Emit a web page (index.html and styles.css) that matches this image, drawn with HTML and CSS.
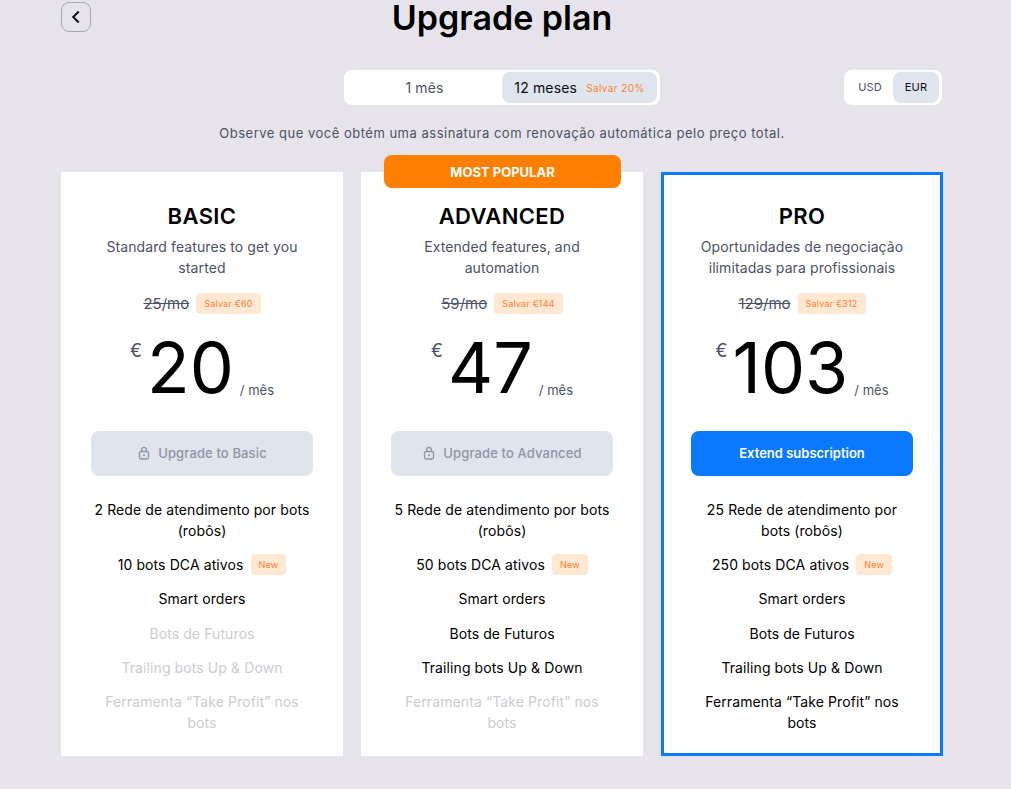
FILE: index.html
```html
<!DOCTYPE html>
<html lang="pt">
<head>
    <meta charset="UTF-8">
    <meta name="viewport" content="width=device-width, initial-scale=1.0">
    <title>Upgrade plan</title>
    <link rel="stylesheet" href="styles.css">
</head>
<body>
    <main class="page">
        <header class="top">
            <button class="back" aria-label="Voltar">
                <svg width="12" height="12" viewBox="0 0 12 12" fill="none"><path d="M8.7.5 3.2 6l5.5 5.5" stroke="#0b0b12" stroke-width="2"/></svg>
            </button>
            <h1>Upgrade plan</h1>
        </header>

        <section class="switches">
            <div class="switch period">
                <button class="opt">1 mês</button>
                <button class="opt active">12 meses <span class="save">Salvar 20%</span></button>
            </div>
            <div class="switch currency">
                <button class="opt">USD</button>
                <button class="opt active">EUR</button>
            </div>
        </section>

        <p class="note">Observe que você obtém uma assinatura com renovação automática pelo preço total.</p>

        <section class="plans">
            <article class="plan">
                <h2>BASIC</h2>
                <p class="desc">Standard features to get you started</p>
                <div class="old"><s>25/mo</s><span class="tag">Salvar €60</span></div>
                <div class="price"><span class="cur">€</span><span class="num">20</span><span class="per">/ mês</span></div>
                <button class="cta locked">
                    <svg width="14" height="14" viewBox="0 0 14 14" fill="none"><rect x="2.5" y="5.5" width="9" height="7.5" rx="1.5" stroke="#8f95a6" stroke-width="1.3"/><path d="M4.7 5.5V3.6a2.3 2.3 0 0 1 4.6 0v1.9" stroke="#8f95a6" stroke-width="1.3"/><circle cx="7" cy="9.2" r="1" fill="#8f95a6"/></svg>
                    Upgrade to Basic
                </button>
                <ul class="features">
                    <li>2 Rede de atendimento por bots (robôs)</li>
                    <li class="tagged">10 bots DCA ativos <span class="tag">New</span></li>
                    <li>Smart orders</li>
                    <li class="off">Bots de Futuros</li>
                    <li class="off">Trailing bots Up &amp; Down</li>
                    <li class="off">Ferramenta “Take Profit” nos bots</li>
                </ul>
            </article>

            <article class="plan">
                <div class="popular">MOST POPULAR</div>
                <h2>ADVANCED</h2>
                <p class="desc">Extended features, and automation</p>
                <div class="old"><s>59/mo</s><span class="tag">Salvar €144</span></div>
                <div class="price"><span class="cur">€</span><span class="num">47</span><span class="per">/ mês</span></div>
                <button class="cta locked">
                    <svg width="14" height="14" viewBox="0 0 14 14" fill="none"><rect x="2.5" y="5.5" width="9" height="7.5" rx="1.5" stroke="#8f95a6" stroke-width="1.3"/><path d="M4.7 5.5V3.6a2.3 2.3 0 0 1 4.6 0v1.9" stroke="#8f95a6" stroke-width="1.3"/><circle cx="7" cy="9.2" r="1" fill="#8f95a6"/></svg>
                    Upgrade to Advanced
                </button>
                <ul class="features">
                    <li>5 Rede de atendimento por bots (robôs)</li>
                    <li class="tagged">50 bots DCA ativos <span class="tag">New</span></li>
                    <li>Smart orders</li>
                    <li>Bots de Futuros</li>
                    <li>Trailing bots Up &amp; Down</li>
                    <li class="off">Ferramenta “Take Profit” nos bots</li>
                </ul>
            </article>

            <article class="plan current">
                <h2>PRO</h2>
                <p class="desc">Oportunidades de negociação ilimitadas para profissionais</p>
                <div class="old"><s>129/mo</s><span class="tag">Salvar €312</span></div>
                <div class="price"><span class="cur">€</span><span class="num">103</span><span class="per">/ mês</span></div>
                <button class="cta primary">Extend subscription</button>
                <ul class="features">
                    <li>25 Rede de atendimento por bots (robôs)</li>
                    <li class="tagged">250 bots DCA ativos <span class="tag">New</span></li>
                    <li>Smart orders</li>
                    <li>Bots de Futuros</li>
                    <li>Trailing bots Up &amp; Down</li>
                    <li>Ferramenta “Take Profit” nos bots</li>
                </ul>
            </article>
        </section>
    </main>
</body>
</html>
```

FILE: styles.css
```css
* {
    box-sizing: border-box;
}

body {
    margin: 0;
    background-color: #e6e4ea;
    font-family: Inter, "Liberation Sans", sans-serif;
    color: #000;
}

button {
    font-family: inherit;
    border: none;
    cursor: pointer;
}

.page {
    width: 882px;
    margin-left: 61px;
}

.top {
    display: flex;
    justify-content: center;
    position: relative;
    height: 36px;
}

.top h1 {
    margin: 0;
    font-size: 34px;
    font-weight: 600;
    line-height: 36px;
}

.back {
    position: absolute;
    left: 0;
    top: 2px;
    width: 30px;
    height: 30px;
    display: flex;
    align-items: center;
    justify-content: center;
    padding: 0;
    background: transparent;
    border: 1px solid #a9a8ae;
    border-radius: 8px;
}

.switches {
    display: flex;
    margin-top: 34px;
    padding-left: 283px;
}

.switch {
    display: flex;
    height: 35px;
    padding: 2px 3px;
    background-color: #fff;
    border-radius: 8px;
}

.period {
    width: 316px;
}

.currency {
    width: 98px;
    margin-left: 184px;
}

.opt {
    height: 31px;
    padding: 0 0 1px;
    background: transparent;
    border-radius: 8px;
    color: #4b5265;
    font-size: 14px;
    letter-spacing: 0.15px;
}

.opt.active {
    background-color: #dfe4ed;
    color: #0b0b12;
}

.period .opt {
    width: 155px;
}

.period .opt:first-child {
    flex: 1;
}

.currency .opt {
    flex: 1;
    font-size: 11px;
}

.currency .opt.active {
    flex: 0 0 46px;
}

.save {
    margin-left: 5px;
    font-size: 10px;
    color: #ff7f30;
    letter-spacing: 0.4px;
    vertical-align: 1px;
}

.note {
    margin: 20px 0 0;
    text-align: center;
    font-size: 13px;
    line-height: 16px;
    letter-spacing: 0.5px;
    color: #4b5265;
}

.plans {
    display: grid;
    grid-template-columns: repeat(3, 282px);
    gap: 18px;
    margin-top: 31px;
}

.plan {
    position: relative;
    height: 584px;
    padding: 32px 30px 0;
    background-color: #fff;
    text-align: center;
}

.plan.current {
    border: 3px solid #0a78ff;
    padding: 29px 27px 0;
}

.popular {
    position: absolute;
    top: -17px;
    left: 23px;
    width: 237px;
    height: 33px;
    line-height: 34px;
    background-color: #ff7f00;
    border-radius: 8px;
    color: #fff;
    font-size: 13px;
    font-weight: 700;
}

.plan h2 {
    margin: 0;
    font-size: 22px;
    font-weight: 600;
    line-height: 24px;
    letter-spacing: 0.4px;
}

.desc {
    margin: 8px 0 0;
    font-size: 14px;
    line-height: 21px;
    letter-spacing: 0.1px;
    color: #4b5265;
}

.old {
    display: flex;
    justify-content: center;
    align-items: center;
    gap: 7px;
    margin-top: 15px;
    height: 21px;
    font-size: 15px;
    color: #4b5265;
}

.tag {
    display: inline-block;
    padding: 0 8px;
    height: 21px;
    line-height: 21px;
    background-color: #ffe8d2;
    border-radius: 4px;
    color: #ff7f30;
    font-size: 9px;
    letter-spacing: 0.2px;
}

.price {
    display: flex;
    justify-content: center;
    align-items: flex-end;
    margin-top: 14px;
    height: 80px;
}

.cur {
    align-self: flex-start;
    margin: 11px 5px 0 0;
    font-size: 18px;
    line-height: 24px;
    color: #4b5265;
}

.num {
    margin-bottom: 4px;
    font-size: 70px;
    line-height: 72px;
    font-weight: 400;
}

.per {
    margin: 0 0 10px 6px;
    font-size: 13px;
    line-height: 16px;
    color: #4b5265;
}

.cta {
    display: flex;
    align-items: center;
    justify-content: center;
    gap: 7px;
    width: 222px;
    height: 45px;
    margin-top: 23px;
    padding: 0 0 1px;
    border-radius: 8px;
    font-size: 13px;
    font-weight: 500;
}

.cta.locked {
    background-color: #dfe4ed;
    color: #8f95a6;
    letter-spacing: 0.13px;
}

.cta.primary {
    background-color: #0a78ff;
    color: #fff;
    font-weight: 600;
}

.features {
    list-style: none;
    margin: 23px 0 0;
    padding: 0;
    display: flex;
    flex-direction: column;
    gap: 13.2px;
    font-size: 14px;
    line-height: 21px;
    letter-spacing: 0.1px;
}

.features .tagged {
    display: flex;
    justify-content: center;
    gap: 7px;
}

.features .off {
    color: #ccccd2;
}
```
